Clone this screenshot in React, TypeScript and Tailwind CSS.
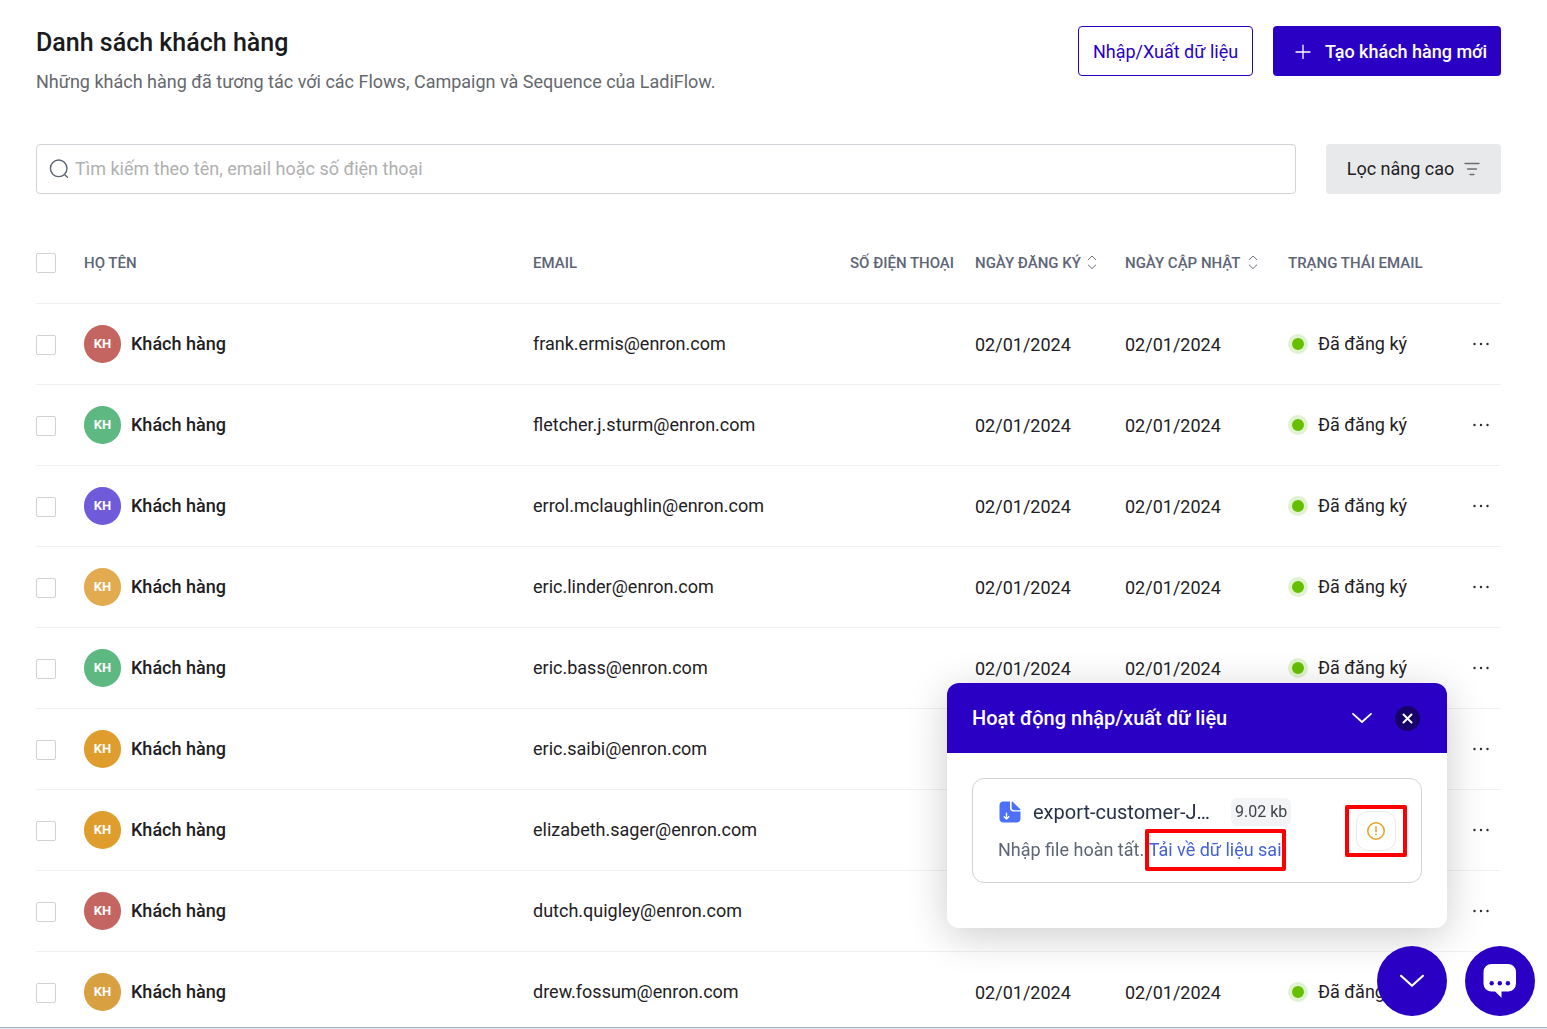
import React from "react";

type Customer = { email: string; avatar: string };

const customers: Customer[] = [
  { email: "frank.ermis@enron.com", avatar: "bg-[#c56562]" },
  { email: "fletcher.j.sturm@enron.com", avatar: "bg-[#5eb881]" },
  { email: "errol.mclaughlin@enron.com", avatar: "bg-[#6f5ad9]" },
  { email: "eric.linder@enron.com", avatar: "bg-[#e3ab50]" },
  { email: "eric.bass@enron.com", avatar: "bg-[#5eb881]" },
  { email: "eric.saibi@enron.com", avatar: "bg-[#df9d2d]" },
  { email: "elizabeth.sager@enron.com", avatar: "bg-[#df9d2d]" },
  { email: "dutch.quigley@enron.com", avatar: "bg-[#c56562]" },
  { email: "drew.fossum@enron.com", avatar: "bg-[#d8a041]" },
];

function Checkbox({ label }: { label: string }) {
  return (
    <input
      type="checkbox"
      aria-label={label}
      className="block size-5 appearance-none rounded-xs border border-[#d1d2d6] bg-white checked:border-[#2a00c4] checked:bg-[#2a00c4]"
    />
  );
}

function SortIcon() {
  return (
    <svg width="10" height="16" viewBox="0 0 10 16" fill="none" stroke="#6b7080" strokeLinecap="round" strokeLinejoin="round" aria-hidden="true">
      <path d="M1.2 4.7 5 1l3.8 3.700M1.200 9.900 5 13.600l3.800-3.700" />
    </svg>
  );
}

function SearchIcon() {
  return (
    <svg width="20" height="20" viewBox="0 0 20 20" fill="none" stroke="#5a6474" strokeWidth="1.4" strokeLinecap="round" aria-hidden="true">
      <circle cx="9.7" cy="9.3" r="8.3" />
      <path d="m16 16 2.4 2.2" />
    </svg>
  );
}

function FilterIcon() {
  return (
    <svg width="16" height="14" viewBox="0 0 16 14" fill="none" stroke="#6b6e73" strokeWidth="1.3" strokeLinecap="round" aria-hidden="true">
      <path d="M1 1.5h14M3.5 7h9M6 12.5h4" />
    </svg>
  );
}

function PlusIcon() {
  return (
    <svg width="16" height="16" viewBox="0 0 16 16" fill="none" stroke="white" strokeWidth="1.3" strokeLinecap="round" aria-hidden="true">
      <path d="M8 1.2v13.2M1 8h14" />
    </svg>
  );
}

function FileIcon() {
  return (
    <svg width="22" height="22" viewBox="0 0 22 22" fill="none" aria-hidden="true">
      <path d="M4.5 0.5H11V6.5C11 9 12.2 10.6 15 10.6H21.5V17.5C21.5 20 20 21.5 17.5 21.5H4.5C2 21.5 0.5 20 0.5 17.5V4.5C0.5 2 2 0.5 4.5 0.5Z" fill="#4d70f8" />
      <path d="M12.6 1.3C12.6 0.6 13.3 0.4 13.8 0.9L21.2 8.1C21.7 8.6 21.4 9.3 20.7 9.3H15.4C13.6 9.3 12.6 8.3 12.6 6.5Z" fill="#4d70f8" />
      <path d="M7.5 12.2v5.6M5.2 15.7l2.3 2.3 2.3-2.3" stroke="white" strokeWidth="1.4" strokeLinecap="round" strokeLinejoin="round" />
    </svg>
  );
}

function WarningIcon() {
  return (
    <svg width="20" height="20" viewBox="0 0 20 20" fill="none" stroke="#e7a020" strokeWidth="1.5" strokeLinecap="round" aria-hidden="true">
      <circle cx="10" cy="10" r="8.2" />
      <path d="M10 5.8v4.9" />
      <circle cx="10" cy="13.6" r="0.9" fill="#e7a020" stroke="none" />
    </svg>
  );
}

function ChatIcon() {
  return (
    <svg width="34" height="36" viewBox="0 0 34 36" aria-hidden="true">
      <path d="M8.5 1h16.500a8 8 0 0 1 8 8v11.500a8 8 0 0 1-8 8h-6.500v6.200l-6.400-6.200H8.500a8 8 0 0 1-8-8V9a8 8 0 0 1 8-8Z" fill="white" />
      <circle cx="8.700" cy="20.200" r="2.200" fill="#2a00c4" />
      <circle cx="16.800" cy="20.200" r="2.200" fill="#2a00c4" />
      <circle cx="24.900" cy="20.200" r="2.200" fill="#2a00c4" />
    </svg>
  );
}

function Highlight({ className }: { className: string }) {
  return <span aria-hidden="true" className={"pointer-events-none absolute rounded-xs border-4 border-[#ff0000] " + className} />;
}

function ActivityPanel() {
  return (
    <section className="fixed right-[100px] bottom-[101px] w-[500px] overflow-hidden rounded-xl bg-white shadow-[0_8px_40px_rgba(0,0,0,0.2)]">
      <header className="flex h-[70px] items-center bg-[#2a00c4] pr-[27px] pl-[25px] text-white">
        <h2 className="flex-1 text-xl font-medium">Hoạt động nhập/xuất dữ liệu</h2>
        <button type="button" aria-label="Thu gọn" className="mr-[22px]">
          <svg width="22" height="12" viewBox="0 0 22 12" fill="none" stroke="white" strokeWidth="1.8" strokeLinecap="round" strokeLinejoin="round" aria-hidden="true">
            <path d="m2 1.800 9 8.200 9-8.200" />
          </svg>
        </button>
        <button type="button" aria-label="Đóng" className="flex size-[25px] items-center justify-center rounded-full bg-[#170069]">
          <svg width="11" height="11" viewBox="0 0 11 11" stroke="white" strokeWidth="2" strokeLinecap="round" aria-hidden="true">
            <path d="m1.500 1.500 8 8M9.500 1.500l-8 8" />
          </svg>
        </button>
      </header>
      <div className="px-[25px] pt-[25px] pb-[45px]">
        <div className="flex h-[105px] items-center rounded-xl border border-[#d0d2d9] px-[25px]">
          <div className="flex-1">
            <div className="flex items-center">
              <span className="ml-px">
                <FileIcon />
              </span>
              <span className="ml-3 w-[178px] text-xl leading-7 whitespace-nowrap text-[#263249]">export-customer-J…</span>
              <span className="ml-5 rounded-md bg-[#f3f4f6] px-1 text-base leading-7 text-[#3f4248]">9.02 kb</span>
            </div>
            <p className="mt-2.5 text-lg leading-7 text-[#5d6577]">
              Nhập file hoàn tất.{" "}
              <span className="relative inline-block">
                <a href="#errors" className="text-[#4361d8]">
                  Tải về dữ liệu sai
                </a>
                <Highlight className="-inset-x-1 -inset-y-[7px]" />
              </span>
            </p>
          </div>
          <div className="relative">
            <button type="button" aria-label="Xem lỗi" className="flex size-10 items-center justify-center rounded-xl border border-[#e8e8ec]">
              <WarningIcon />
            </button>
            <Highlight className="-inset-x-[11px] -inset-y-1.5" />
          </div>
        </div>
      </div>
    </section>
  );
}

export default function App() {
  return (
    <div className="flex h-screen flex-col overflow-hidden bg-white font-[Roboto,sans-serif] text-[#1e2023]">
      <main className="min-h-0 flex-1 overflow-hidden pr-[46px] pl-9">
        <header className="flex items-start justify-between pt-[26px]">
          <div>
            <h1 className="text-[25px] leading-[34px] font-medium text-[#1a1b1e]">Danh sách khách hàng</h1>
            <p className="mt-2 text-lg leading-7 text-[#65686d]">
              Những khách hàng đã tương tác với các Flows, Campaign và Sequence của LadiFlow.
            </p>
          </div>
          <div className="flex gap-5 text-lg">
            <button type="button" className="h-[50px] w-[175px] rounded-sm border border-[#2a00c4] pt-0.5 text-[#2a00c4]">
              Nhập/Xuất dữ liệu
            </button>
            <button type="button" className="flex h-[50px] w-[228px] items-center justify-center gap-3.5 rounded-sm bg-[#2a00c4] pt-0.5 pl-2 font-medium text-white">
              <PlusIcon />
              Tạo khách hàng mới
            </button>
          </div>
        </header>

        <div className="mt-12 flex gap-[30px]">
          <label className="flex h-[50px] flex-1 items-center gap-1.5 rounded-sm border border-[#d1d3d8] px-3">
            <SearchIcon />
            <input
              type="search"
              aria-label="Tìm kiếm khách hàng"
              placeholder="Tìm kiếm theo tên, email hoặc số điện thoại"
              className="flex-1 bg-transparent text-lg outline-none placeholder:text-[#b0b0b0]"
            />
          </label>
          <button type="button" className="flex h-[50px] w-[175px] items-center justify-center gap-2.5 rounded-sm bg-[#e8e9eb] text-lg">
            Lọc nâng cao
            <FilterIcon />
          </button>
        </div>

        <table className="mt-7 w-full table-fixed border-collapse text-left text-lg">
          <colgroup>
            <col className="w-12" />
            <col />
            <col className="w-[317px]" />
            <col className="w-[125px]" />
            <col className="w-[150px]" />
            <col className="w-[163px]" />
            <col className="w-[173px]" />
            <col className="w-10" />
          </colgroup>
          <thead>
            <tr className="h-[81px] border-b border-[#f1f1f3] text-[15px] whitespace-nowrap text-[#5d6577] *:pt-0.5 *:font-medium">
              <th scope="col">
                <Checkbox label="Chọn tất cả" />
              </th>
              <th scope="col">HỌ TÊN</th>
              <th scope="col">EMAIL</th>
              <th scope="col">SỐ ĐIỆN THOẠI</th>
              <th scope="col">
                <button type="button" className="flex items-center gap-1.5">
                  NGÀY ĐĂNG KÝ <SortIcon />
                </button>
              </th>
              <th scope="col">
                <button type="button" className="flex items-center gap-2">
                  NGÀY CẬP NHẬT <SortIcon />
                </button>
              </th>
              <th scope="col">TRẠNG THÁI EMAIL</th>
              <th scope="col" aria-label="Thao tác" />
            </tr>
          </thead>
          <tbody>
            {customers.map((c) => (
              <tr key={c.email} className="h-[81px] border-b border-[#f1f1f3] whitespace-nowrap">
                <td className="pt-0.5">
                  <Checkbox label={"Chọn " + c.email} />
                </td>
                <td>
                  <div className="flex items-center gap-2.5 font-medium">
                    <span className={"flex h-[38px] w-[37px] items-center justify-center rounded-full pt-0.5 text-[13px] font-bold text-white " + c.avatar}>KH</span>
                    Khách hàng
                  </div>
                </td>
                <td>{c.email}</td>
                <td />
                <td className="pt-0.5">02/01/2024</td>
                <td className="pt-0.5">02/01/2024</td>
                <td>
                  <div className="flex items-center gap-2.5">
                    <span className="size-5 rounded-full border-4 border-[#e0f2cf] bg-[#66c000]" />
                    Đã đăng ký
                  </div>
                </td>
                <td>
                  <button type="button" aria-label="Tùy chọn" className="flex h-6 items-center pl-3">
                    <svg width="16" height="4" viewBox="0 0 16 4" fill="#2b2d31" aria-hidden="true">
                      <circle cx="1.500" cy="2" r="1.200" />
                      <circle cx="8" cy="2" r="1.200" />
                      <circle cx="14.500" cy="2" r="1.200" />
                    </svg>
                  </button>
                </td>
              </tr>
            ))}
          </tbody>
        </table>
      </main>
      <footer className="h-0.5 shrink-0 border-t border-[#a9b5c4] bg-[#dfe9f8]" />

      <ActivityPanel />
      <div className="fixed right-3 bottom-[13px] flex gap-[18px]">
        <button type="button" aria-label="Mở rộng" className="flex size-[70px] items-center justify-center rounded-full bg-[#2a00c4]">
          <svg width="26" height="14" viewBox="0 0 26 14" fill="none" stroke="white" strokeWidth="2.200" strokeLinecap="round" strokeLinejoin="round" aria-hidden="true">
            <path d="m2 1.800 11 10 11-10" />
          </svg>
        </button>
        <button type="button" aria-label="Trò chuyện" className="flex size-[70px] items-center justify-center rounded-full bg-[#2a00c4]">
          <ChatIcon />
        </button>
      </div>
    </div>
  );
}
